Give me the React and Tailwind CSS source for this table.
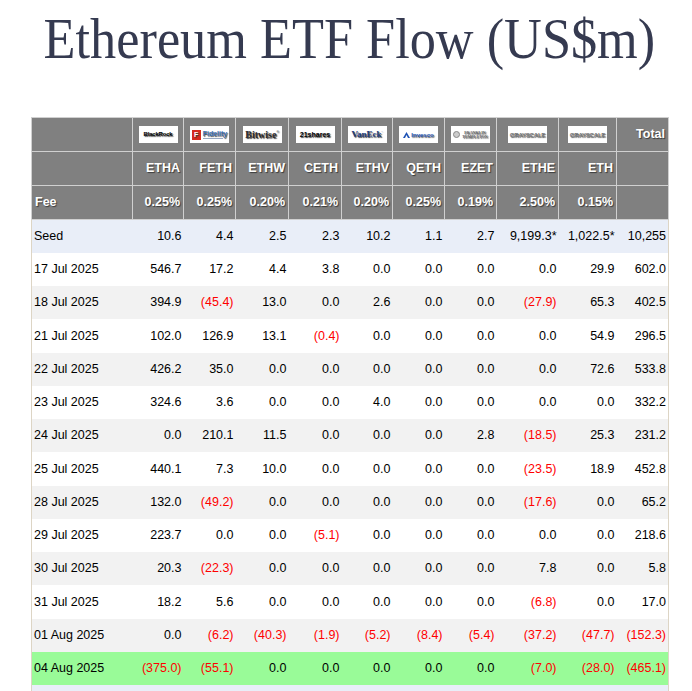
import React from "react";

const sans = "font-['Liberation_Sans',Arial,sans-serif]";

function LogoBox({ children }) {
  return (
    <div className="mx-auto flex h-[17px] w-[39px] items-center justify-center overflow-hidden bg-white">
      {children}
    </div>
  );
}

const logos = {
  blackrock: (
    <LogoBox>
      <span className="text-[6px] font-bold tracking-[-0.2px] text-black">BlackRock</span>
    </LogoBox>
  ),
  fidelity: (
    <LogoBox>
      <span className="mr-[2px] flex h-[10px] w-[9px] items-center justify-center bg-[#d52b1e] text-[7px] font-bold leading-none text-white">
        F
      </span>
      <span className="flex flex-col leading-none">
        <span className="text-[7px] font-bold text-[#3b6db3]">Fidelity</span>
        <span className="mt-[1px] h-[1px] w-[20px] bg-[#9aa9c2]" />
      </span>
    </LogoBox>
  ),
  bitwise: (
    <LogoBox>
      <span className="font-['Liberation_Serif',serif] text-[10px] font-bold leading-none text-[#2a2a2a]">
        Bitwise
      </span>
      <span className="mb-[4px] text-[3px] text-[#555]">®</span>
    </LogoBox>
  ),
  shares: (
    <LogoBox>
      <span className="text-[7px] leading-none text-black">21shares</span>
    </LogoBox>
  ),
  vaneck: (
    <LogoBox>
      <span className="font-['Liberation_Serif',serif] text-[9px] font-bold leading-none text-[#1c3b7c]">
        VanEck
      </span>
      <span className="mb-[4px] text-[3px] text-[#1c3b7c]">·</span>
    </LogoBox>
  ),
  invesco: (
    <LogoBox>
      <svg width="7" height="6" viewBox="0 0 7 6" className="mr-[1px]">
        <path d="M0 6 L3.5 0 L7 6 Z" fill="#1f53b5" />
        <path d="M2 6 L3.5 3 L5 6 Z" fill="#ffffff" />
      </svg>
      <span className="text-[6px] leading-none text-[#1f53b5]">Invesco</span>
    </LogoBox>
  ),
  franklin: (
    <LogoBox>
      <span className="mr-[2px] h-[7px] w-[7px] rounded-full border border-[#888] bg-[#ccc]" />
      <span className="flex flex-col font-['Liberation_Serif',serif] text-[4px] leading-[4px] text-[#666]">
        <span>FRANKLIN</span>
        <span>TEMPLETON</span>
      </span>
    </LogoBox>
  ),
  grayscale: (
    <LogoBox>
      <span className="text-[6px] leading-none tracking-[-0.2px] text-[#777]">GRAYSCALE</span>
    </LogoBox>
  ),
};

const cols = [
  { t: "ETHA", fee: "0.25%", logo: "blackrock", w: "w-[51px]" },
  { t: "FETH", fee: "0.25%", logo: "fidelity", w: "w-[52px]" },
  { t: "ETHW", fee: "0.20%", logo: "bitwise", w: "w-[53px]" },
  { t: "CETH", fee: "0.21%", logo: "shares", w: "w-[53px]" },
  { t: "ETHV", fee: "0.20%", logo: "vaneck", w: "w-[51px]" },
  { t: "QETH", fee: "0.25%", logo: "invesco", w: "w-[52px]" },
  { t: "EZET", fee: "0.19%", logo: "franklin", w: "w-[52px]" },
  { t: "ETHE", fee: "2.50%", logo: "grayscale", w: "w-[62px]" },
  { t: "ETH", fee: "0.15%", logo: "grayscale", w: "w-[58px]" },
];

const rows = [
  ["Seed", "blue", "10.6", "4.4", "2.5", "2.3", "10.2", "1.1", "2.7", "9,199.3*", "1,022.5*", "10,255"],
  ["17 Jul 2025", "white", "546.7", "17.2", "4.4", "3.8", "0.0", "0.0", "0.0", "0.0", "29.9", "602.0"],
  ["18 Jul 2025", "gray", "394.9", "(45.4)", "13.0", "0.0", "2.6", "0.0", "0.0", "(27.9)", "65.3", "402.5"],
  ["21 Jul 2025", "white", "102.0", "126.9", "13.1", "(0.4)", "0.0", "0.0", "0.0", "0.0", "54.9", "296.5"],
  ["22 Jul 2025", "gray", "426.2", "35.0", "0.0", "0.0", "0.0", "0.0", "0.0", "0.0", "72.6", "533.8"],
  ["23 Jul 2025", "white", "324.6", "3.6", "0.0", "0.0", "4.0", "0.0", "0.0", "0.0", "0.0", "332.2"],
  ["24 Jul 2025", "gray", "0.0", "210.1", "11.5", "0.0", "0.0", "0.0", "2.8", "(18.5)", "25.3", "231.2"],
  ["25 Jul 2025", "white", "440.1", "7.3", "10.0", "0.0", "0.0", "0.0", "0.0", "(23.5)", "18.9", "452.8"],
  ["28 Jul 2025", "gray", "132.0", "(49.2)", "0.0", "0.0", "0.0", "0.0", "0.0", "(17.6)", "0.0", "65.2"],
  ["29 Jul 2025", "white", "223.7", "0.0", "0.0", "(5.1)", "0.0", "0.0", "0.0", "0.0", "0.0", "218.6"],
  ["30 Jul 2025", "gray", "20.3", "(22.3)", "0.0", "0.0", "0.0", "0.0", "0.0", "7.8", "0.0", "5.8"],
  ["31 Jul 2025", "white", "18.2", "5.6", "0.0", "0.0", "0.0", "0.0", "0.0", "(6.8)", "0.0", "17.0"],
  ["01 Aug 2025", "gray", "0.0", "(6.2)", "(40.3)", "(1.9)", "(5.2)", "(8.4)", "(5.4)", "(37.2)", "(47.7)", "(152.3)"],
  ["04 Aug 2025", "green", "(375.0)", "(55.1)", "0.0", "0.0", "0.0", "0.0", "0.0", "(7.0)", "(28.0)", "(465.1)"],
  ["Total", "blue", "", "", "", "", "", "", "", "", "", ""],
];

const rowBg = {
  blue: "bg-[#e9eef8]",
  white: "bg-white",
  gray: "bg-[#f2f2f2]",
  green: "bg-[#99fb98]",
};

const th = "border border-[#d0d0d0] bg-[#808080] px-[3px] text-[12.5px] font-bold text-white [text-shadow:1px_1px_1px_#3a3a3a]";

export default function App() {
  return (
    <div className={`min-h-screen bg-white ${sans}`}>
      <div className="ml-[31px] w-[637px]">
        {/* Title */}
        <div className="flex justify-center pt-[11px]">
          <h1 className="shrink-0 scale-x-[0.934] whitespace-nowrap font-['Liberation_Serif','Times_New_Roman',serif] text-[56px] leading-none text-[#353a50]">
            Ethereum ETF Flow (US$m)
          </h1>
        </div>

        {/* Flow table */}
        <table className="mt-[50px] w-[637px] table-fixed border-collapse">
          <colgroup>
            <col className="w-[101px]" />
            {cols.map((c) => (
              <col key={c.t} className={c.w} />
            ))}
            <col className="w-[52px]" />
          </colgroup>
          <thead>
            <tr className="h-[34px]">
              <th className={th} />
              {cols.map((c) => (
                <th key={c.t} className={th}>
                  {logos[c.logo]}
                </th>
              ))}
              <th className={`${th} text-right`}>Total</th>
            </tr>
            <tr className="h-[34px]">
              <th className={th} />
              {cols.map((c) => (
                <th key={c.t} className={`${th} text-right`}>
                  {c.t}
                </th>
              ))}
              <th className={th} />
            </tr>
            <tr className="h-[34px]">
              <th className={`${th} text-left`}>Fee</th>
              {cols.map((c) => (
                <th key={c.t} className={`${th} text-right`}>
                  {c.fee}
                </th>
              ))}
              <th className={th} />
            </tr>
          </thead>
          <tbody>
            {rows.map(([label, bg, ...vals]) => (
              <tr key={label} className={`h-[33.25px] ${rowBg[bg]}`}>
                <td className="border-l border-[#ddd5c5] px-[2px] text-left text-[12.5px] text-black">{label}</td>
                {vals.map((v, i) => (
                  <td
                    key={i}
                    className={`px-[2px] text-right text-[12.5px] ${
                      v.startsWith("(") ? "text-[#ff0000]" : "text-black"
                    } ${i === vals.length - 1 ? "border-r border-[#ddd5c5]" : ""}`}
                  >
                    {v}
                  </td>
                ))}
              </tr>
            ))}
          </tbody>
        </table>
      </div>
    </div>
  );
}
